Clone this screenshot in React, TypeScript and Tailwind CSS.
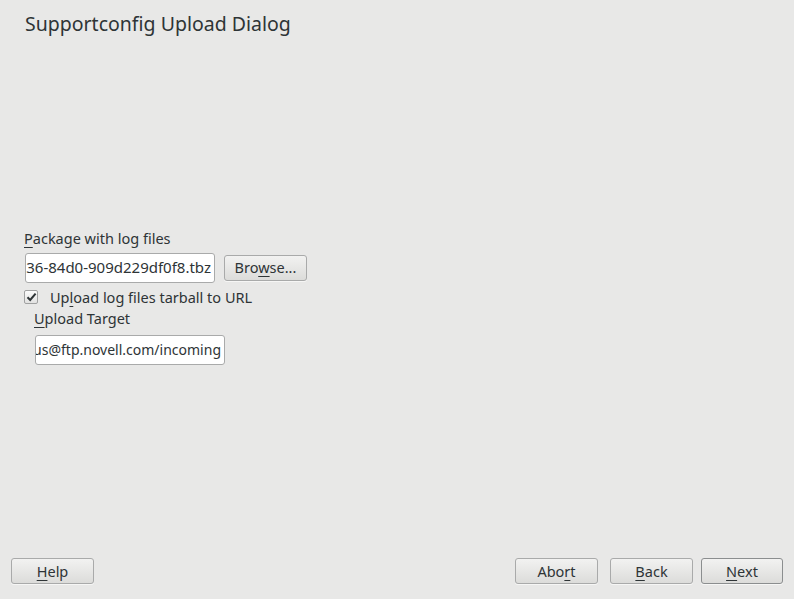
import type { ReactNode } from "react";

function Mn({ children }: { children: ReactNode }) {
  return <span className="underline decoration-1 underline-offset-[3px]">{children}</span>;
}

function Button({ children, width = "w-[83px]", strong = false }: { children: ReactNode; width?: string; strong?: boolean }) {
  return (
    <button
      type="button"
      className={`${width} h-[26px] rounded-[3px] border bg-gradient-to-b from-[#f2f2f1] to-[#dcdcda] text-[14.5px] leading-none text-[#2e3436] shadow-[0_1px_0_rgba(255,255,255,0.6)] ${
        strong ? "border-[#8b8e8f]" : "border-[#a9aaaa]"
      }`}
    >
      {children}
    </button>
  );
}

function Field({ value, size = "text-[15px]" }: { value: string; size?: string }) {
  return (
    <div className="flex h-[30px] w-[190px] items-center justify-end overflow-hidden rounded-[3px] border border-[#a9aaaa] bg-white pr-[3px]">
      <span className={`whitespace-nowrap ${size} text-[#2e3436]`}>{value}</span>
    </div>
  );
}

export default function App() {
  return (
    <div
      className="flex h-[599px] w-[794px] flex-col bg-[#e8e8e7] text-[#2e3436]"
      style={{ fontFamily: '"Noto Sans", "Open Sans", sans-serif' }}
    >
      <h1 className="pl-[25px] pt-[10px] text-[19.5px] leading-[28px] font-normal">Supportconfig Upload Dialog</h1>

      <div className="flex flex-1 flex-col justify-center pl-[24px] pb-[4px]">
        <label className="text-[14.5px] leading-[20px]">
          <Mn>P</Mn>ackage with log files
        </label>
        <div className="mt-[5px] flex items-center gap-[9px] pl-[1px]">
          <Field value="/var/log/scc_linux_190107_1212_4b2c0c36-84d0-909d229df0f8.tbz" />
          <Button>
            Bro<Mn>w</Mn>se...
          </Button>
        </div>
        <div className="mt-[4px] flex items-center gap-[12px]">
          <span className="flex h-[14px] w-[14px] items-center justify-center rounded-[2px] border border-[#a0a1a1] bg-gradient-to-b from-[#fbfbfb] to-[#e2e2e1]">
            <svg width="11" height="10" viewBox="0 0 11 10">
              <path d="M1.5 5.2 L4.2 8 L9.6 1.6" fill="none" stroke="#2e3436" strokeWidth="2" />
            </svg>
          </span>
          <span className="text-[14.5px] leading-[20px]">
            Up<Mn>l</Mn>oad log files tarball to URL
          </span>
        </div>
        <div className="mt-[-1px] pl-[10px]">
          <label className="text-[14.5px] leading-[20px]">
            <Mn>U</Mn>pload Target
          </label>
          <div className="mt-[5px] pl-[1px]">
            <Field value="ftp://anonymous@ftp.novell.com/incoming" size="text-[14px]" />
          </div>
        </div>
      </div>

      <div className="flex items-center gap-[12px] px-[11px] pb-[15px]">
        <Button>
          <Mn>H</Mn>elp
        </Button>
        <div className="flex-1" />
        <Button>
          Abo<Mn>r</Mn>t
        </Button>
        <div className="flex gap-[8px]">
          <Button>
            <Mn>B</Mn>ack
          </Button>
          <Button width="w-[82px]" strong>
            <Mn>N</Mn>ext
          </Button>
        </div>
      </div>
    </div>
  );
}
